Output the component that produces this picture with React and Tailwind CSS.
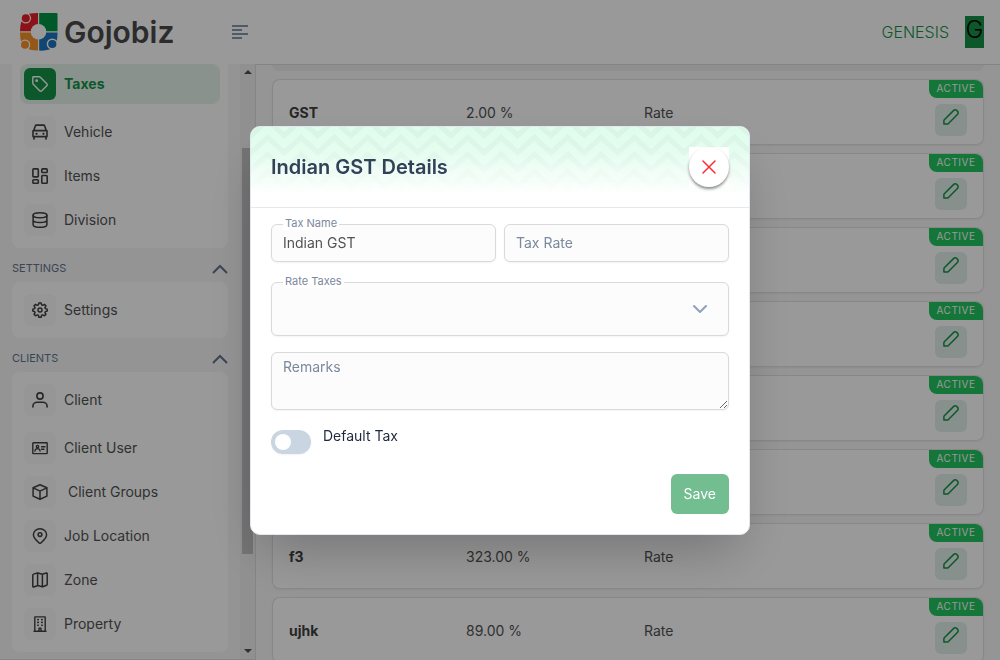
import React from "react";

const taxes = [
  { name: "GST", rate: "2.00 %", type: "Rate" },
  { name: "", rate: "", type: "" },
  { name: "", rate: "", type: "" },
  { name: "", rate: "", type: "" },
  { name: "", rate: "", type: "" },
  { name: "", rate: "", type: "" },
  { name: "f3", rate: "323.00 %", type: "Rate" },
  { name: "ujhk", rate: "89.00 %", type: "Rate" },
];

function Icon({ children, width = 1.4 }) {
  return (
    <svg viewBox="0 0 16 16" className="size-4 shrink-0" fill="none" stroke="currentColor" strokeWidth={width} strokeLinecap="round" strokeLinejoin="round" aria-hidden="true">
      {children}
    </svg>
  );
}

const icons = {
  tag: (
    <Icon width={1.4}>
      <path d="M.8 1.4v5.7c0 .5.2.9.5 1.2l6.4 6.5c.6.6 1.5.6 2.1 0l5-5c.6-.6.6-1.5 0-2.1L8.300 1.200C8 .9 7.600.8 7.200.8H1.400a.6.6 0 0 0-.6.6Z" />
      <circle cx="4.700" cy="4.700" r=".7" />
    </Icon>
  ),
  car: (
    <Icon width={1.600}>
      <path d="M1.700 6.800 3.300 2c.2-.6.6-.9 1.200-.9h7c.6 0 1 .3 1.200.9l1.600 4.800M1.500 6.600h13c.3 0 .5.2.5.5v5.500H1V7.100c0-.3.2-.5.500-.5ZM2 12.800v2.300M14 12.800v2.300" />
      <path d="M4.300 9.700h.4M11.300 9.700h.4" strokeWidth="1.900" />
    </Icon>
  ),
  grid: (
    <Icon width={1.600}>
      <rect x=".9" y=".9" width="5.400" height="8" rx=".8" />
      <rect x="9.800" y=".9" width="5.400" height="3.600" rx=".8" />
      <rect x=".9" y="11.700" width="5.400" height="3.500" rx=".8" />
      <rect x="9.800" y="7.500" width="5.400" height="7.700" rx=".8" />
    </Icon>
  ),
  database: (
    <Icon width={1.500}>
      <ellipse cx="8" cy="3.300" rx="6.900" ry="2.500" />
      <path d="M1.100 3.300v9.100c0 1.600 3 2.900 6.900 2.900s6.900-1.300 6.900-2.900V3.300M1.100 7.800c0 1.600 3 2.800 6.900 2.800s6.900-1.200 6.900-2.800" />
    </Icon>
  ),
  gear: (
    <Icon width={1.500}>
      <circle cx="8" cy="8" r="2" />
      <path d="M6.900.9h2.200l.5 1.900 1.100.5 1.800-.9 1.400 1.400-.9 1.800.4 1 1.800.5v1.900l-1.800.6-.4 1 .9 1.800-1.500 1.400-1.700-.9-1.100.4-.5 1.900H6.900l-.5-1.900-1.100-.4-1.700.9-1.500-1.400.9-1.800-.4-1L.8 9V7.100l1.800-.5.4-1-.9-1.800 1.400-1.400 1.800.9 1.100-.5Z" />
    </Icon>
  ),
  user: (
    <Icon width={1.600}>
      <circle cx="8" cy="4" r="3.100" />
      <path d="M.9 15v-.6C.9 11.900 3 10.300 5.200 10.300h5.600c2.200 0 4.300 1.600 4.300 4.100v.6" />
    </Icon>
  ),
  idCard: (
    <Icon width={1.400}>
      <rect x=".8" y="2.700" width="14.400" height="10.900" rx=".6" />
      <circle cx="5.500" cy="6.600" r="1.200" />
      <path d="M2.900 11c.2-1.500 1.200-2.400 2.600-2.400S7.900 9.500 8.100 11M9.600 6.700H13M9.600 9.300h2.300" />
    </Icon>
  ),
  box: (
    <Icon width={1.500}>
      <path d="M8 .8 14.900 3.800v8.300L8 15.300l-6.900-3.200V3.800ZM1.200 3.900 8 7.200l6.800-3.300M8 7.200v8" />
    </Icon>
  ),
  pin: (
    <Icon width={1.500}>
      <path d="M8 15.300c-.4 0-.8-.2-1.200-.6C3.800 12 1.400 9.900 1.400 6.800 1.400 3.300 4.400.8 8 .8s6.600 2.500 6.600 6c0 3.100-2.400 5.200-5.400 7.900-.4.400-.8.600-1.200.6Z" />
      <circle cx="8" cy="6.600" r="1.900" />
    </Icon>
  ),
  map: (
    <Icon width={1.500}>
      <path d="M.8 3.200c0-.5.3-.9.8-1.100L5.200 1c.3-.1.500-.1.800 0l4.200 1.300 4.100-1.300c.5-.1.900.2.900.6v10.600c0 .5-.3.900-.7 1l-3.600 1.500c-.3.100-.5.100-.8 0L6 13.500l-4.200 1.500c-.5.200-1-.2-1-.7ZM5.600 1v12.400M10.400 2.400v12.300" />
    </Icon>
  ),
  building: (
    <Icon width={1.400}>
      <path d="M2.800 15V.9h10.400V15M2 15.200h12M7 15v-2.800h2V15" />
      <path d="M5.800 3.600h.5M9.700 3.600h.5M5.800 6.400h.5M9.700 6.400h.5M5.800 9.200h.5M9.700 9.200h.5" strokeWidth="1.600" />
    </Icon>
  ),
};

function Logo() {
  return (
    <svg viewBox="0 0 38 38" className="size-[38px] shrink-0" aria-hidden="true">
      <path d="M9 .8Q13.500 0 18 0v18.300H0Q0 13 1.200 9Z" fill="#e5202a" />
      <path d="M19.200 0h17.300q1 0 1 1v17.300H19.200Z" fill="#009444" />
      <path d="M0 19.400h18v18.100q-5 0-8-.8L1.200 29Q0 25 0 19.400Z" fill="#f6932a" />
      <path d="M19.200 19.400h18.300q0 6-1 9.600l-7 7.500q-5 1.500-10.300 1Z" fill="#1b75bc" />
      <circle cx="18.500" cy="18.800" r="7.800" fill="#fff" />
      <circle cx="5.800" cy="5.200" r="5.300" fill="#fff" />
      <circle cx="5.800" cy="5.200" r="4" fill="#e5202a" />
      <circle cx="5" cy="31.800" r="5.300" fill="#fff" />
      <circle cx="5" cy="31.800" r="4" fill="#f6932a" />
      <circle cx="32.300" cy="31" r="5.600" fill="#fff" />
      <circle cx="32.300" cy="31" r="4.100" fill="#1b75bc" />
    </svg>
  );
}

function NavItem({ icon, label, active, indent }) {
  return (
    <li>
      <a href="#" className={active ? "flex h-10 items-center gap-2 rounded-lg bg-[#e4f3ea] p-1 font-bold text-[#149348]" : "flex h-10 items-center gap-2 rounded-lg p-1 text-[#525252]"}>
        <span className={active ? "flex size-8 items-center justify-center rounded-md bg-[#149348] text-white" : "flex size-8 items-center justify-center rounded-md bg-[#fafafa] text-[#404040]"}>
          {icons[icon]}
        </span>
        <span className={indent ? "ml-1" : ""}>{label}</span>
      </a>
    </li>
  );
}

function Section({ title, children }) {
  return (
    <section>
      <button type="button" className="flex h-[34px] w-full items-center justify-between pt-2 text-[11px] text-slate-500">
        {title}
        <svg viewBox="0 0 16 10" className="h-2.5 w-4" fill="none" stroke="currentColor" strokeWidth="2" aria-hidden="true">
          <path d="m1 9 7-7 7 7" />
        </svg>
      </button>
      {children}
    </section>
  );
}

function Sidebar() {
  return (
    <aside className="flex w-64 shrink-0 overflow-hidden border-r border-b border-[#dedede] bg-[#f7f7f7]">
      <nav className="min-w-0 flex-1 px-3 text-sm">
        <ul className="flex flex-col gap-1 rounded-b-lg bg-white px-2 pb-2">
          <NavItem icon="tag" label="Taxes" active />
          <li className="h-0" aria-hidden="true" />
          <NavItem icon="car" label="Vehicle" />
          <NavItem icon="grid" label="Items" />
          <NavItem icon="database" label="Division" />
        </ul>
        <Section title="SETTINGS">
          <ul className="rounded-lg bg-white p-2">
            <NavItem icon="gear" label="Settings" />
          </ul>
        </Section>
        <Section title="CLIENTS">
          <ul className="flex flex-col gap-1 rounded-lg bg-white p-2">
            <NavItem icon="user" label="Client" />
            <li className="h-0" aria-hidden="true" />
            <NavItem icon="idCard" label="Client User" />
            <NavItem icon="box" label="Client Groups" indent />
            <NavItem icon="pin" label="Job Location" />
            <NavItem icon="map" label="Zone" />
            <NavItem icon="building" label="Property" />
          </ul>
        </Section>
      </nav>
      <div className="flex w-[15px] shrink-0 flex-col items-center bg-[#f1f1f1]" aria-hidden="true">
        <svg viewBox="0 0 8 4" className="mt-1.5 h-1 w-2"><path d="M0 4 4 0l4 4Z" fill="#505050" /></svg>
        <div className="min-h-0 flex-[74]" />
        <div className="min-h-0 w-[11px] flex-[406] bg-[#c1c1c1]" />
        <div className="min-h-0 flex-[95]" />
        <svg viewBox="0 0 8 4" className="mb-1.5 h-1 w-2"><path d="m0 0 4 4 4-4Z" fill="#505050" /></svg>
      </div>
    </aside>
  );
}

function TaxTable() {
  return (
    <table className="w-full table-fixed border-separate border-spacing-x-0 border-spacing-y-2 text-left text-sm text-[#525252]">
      <tbody>
        {taxes.map((tax, i) => (
          <tr key={i} className="h-[66px] rounded-lg shadow-xs">
            <td className="rounded-l-lg border-y border-l border-[#e2e2e2] bg-white px-4 pt-0.5 pb-0 font-bold text-[#404040]">{tax.name}</td>
            <td className="border-y border-[#e2e2e2] bg-white px-4 pt-0.5 pb-0">{tax.rate}</td>
            <td className="border-y border-[#e2e2e2] bg-white px-4 pt-0.5 pb-0">{tax.type}</td>
            <td className="rounded-r-lg border-y border-r border-[#e2e2e2] bg-white p-0">
              <div className="flex h-16 flex-col items-end gap-1.5">
                <span className="flex h-[18px] w-[54px] items-center justify-center rounded-tr-lg rounded-bl-lg bg-[#22c55e] pb-0.5 text-[10px] tracking-wider text-white">ACTIVE</span>
                <button type="button" aria-label="Edit tax" className="mr-4 flex size-8 justify-center rounded-md bg-[#e2f1e9] pt-[5px] text-[#149348]">
                  <Icon width={1.500}>
                    <path d="M.9 15.100v-3.300c0-.4.100-.7.400-1l9.200-9.200c1-1 2.500-1 3.400 0l.5.500c1 1 1 2.400 0 3.400l-9.200 9.200c-.3.300-.6.400-1 .4Z" />
                  </Icon>
                </button>
              </div>
            </td>
          </tr>
        ))}
      </tbody>
    </table>
  );
}

function Zigzag() {
  return (
    <svg className="absolute inset-0 size-full" aria-hidden="true">
      <defs>
        <pattern id="zigzag" width="100" height="17" patternUnits="userSpaceOnUse">
          {[-17, 0, 17].map((y) => (
            <path key={y} transform={`translate(0 ${y})`} d="M0 22 16.700 7 33.300 22 50 7 66.700 22 83.300 7 100 22v7L83.300 14 66.700 29 50 14 33.300 29 16.700 14 0 29Z" fill="#d9f5e6" />
          ))}
        </pattern>
        <linearGradient id="fade" x1="0" y1="0" x2="0" y2="1">
          <stop offset="0" stopColor="#fff" stopOpacity="0" />
          <stop offset=".3" stopColor="#fff" stopOpacity=".15" />
          <stop offset=".85" stopColor="#fff" />
        </linearGradient>
      </defs>
      <rect width="100%" height="100%" fill="#dffdec" />
      <rect width="100%" height="100%" fill="url(#zigzag)" />
      <rect width="100%" height="100%" fill="url(#fade)" />
    </svg>
  );
}

const fieldClass = "block w-full rounded-md border border-[#d9d9d9] bg-[#fcfcfc] px-[11px] text-sm text-[#525252] shadow-xs outline-none placeholder:text-[#7c889c]";
const floatLabel = "absolute -top-2 left-3 bg-white px-0.5 text-[11px] leading-[14px] text-[#7c889c]";

function TaxDialog() {
  return (
    <div className="fixed inset-0 z-20 flex items-center justify-center bg-black/40">
      <div role="dialog" aria-modal="true" aria-labelledby="dialog-title" className="w-full max-w-[500px] overflow-hidden rounded-[10px] border border-slate-200 bg-white shadow-2xl">
        <header className="relative flex items-center justify-between border-b border-gray-200 p-5">
          <Zigzag />
          <h2 id="dialog-title" className="relative text-xl font-semibold text-slate-700">Indian GST Details</h2>
          <div className="relative bg-white">
            <button type="button" aria-label="Close" className="flex size-10 items-center justify-center rounded-full bg-white text-red-500 shadow-[0_2px_3px_rgba(0,0,0,0.45)]">
              <svg viewBox="0 0 14 14" className="size-3.5" fill="none" stroke="currentColor" strokeWidth="1.500" strokeLinecap="round" aria-hidden="true">
                <path d="m1 1 12 12M13 1 1 13" />
              </svg>
            </button>
          </div>
        </header>
        <form className="px-5 pt-4 pb-5" onSubmit={(e) => e.preventDefault()}>
          <div className="grid grid-cols-2 gap-2">
            <div className="relative">
              <input id="tax-name" defaultValue="Indian GST" className={`${fieldClass} h-[38px]`} />
              <label htmlFor="tax-name" className={floatLabel}>Tax Name</label>
            </div>
            <input aria-label="Tax Rate" placeholder="Tax Rate" className={`${fieldClass} h-[38px]`} />
          </div>
          <div className="relative mt-5">
            <select id="rate-taxes" className={`${fieldClass} h-[54px] appearance-none`} />
            <label htmlFor="rate-taxes" className={floatLabel}>Rate Taxes</label>
            <svg viewBox="0 0 14 8" className="pointer-events-none absolute top-[23px] right-[22px] h-2 w-3.5 text-slate-400" fill="none" stroke="currentColor" strokeWidth="2" strokeLinecap="round" aria-hidden="true">
              <path d="m1 1 6 6 6-6" />
            </svg>
          </div>
          <textarea aria-label="Remarks" placeholder="Remarks" className={`${fieldClass} mt-4 h-[58px] pt-1`} />
          <div className="mt-4 flex gap-3 text-sm text-slate-800">
            <input id="default-tax" type="checkbox" className="mt-1 h-6 w-10 appearance-none rounded-full bg-slate-300 p-1 shadow-xs before:block before:size-4 before:rounded-full before:bg-white checked:bg-[#149348] checked:before:ml-4" />
            <label htmlFor="default-tax">Default Tax</label>
          </div>
          <div className="mt-5 flex justify-end">
            <button type="submit" className="h-10 rounded-md bg-[#72be91] px-[13px] text-sm text-white">Save</button>
          </div>
        </form>
      </div>
    </div>
  );
}

export default function App() {
  return (
    <div className="flex h-screen flex-col overflow-hidden bg-[#f8f8f8] font-['Inter','Liberation_Sans',sans-serif]">
      <header className="flex h-16 shrink-0 items-center justify-between bg-white px-4">
        <div className="flex items-center gap-[58px] pl-1">
          <a href="#" className="flex items-center gap-1.5 text-3xl font-semibold text-[#4a4a4a]">
            <Logo />
            Gojobiz
          </a>
          <button type="button" aria-label="Toggle menu" className="text-slate-500">
            <svg viewBox="0 0 16 14" className="h-3.5 w-4" stroke="currentColor" strokeWidth="1.300" aria-hidden="true">
              <path d="M0 1h16M0 5h10M0 9h16M0 13h10" />
            </svg>
          </button>
        </div>
        <div className="flex items-center gap-4">
          <span className="text-base font-light text-[#149348]">GENESIS</span>
          <span className="flex h-8 w-[19px] items-center justify-center bg-[#149348] pb-1 text-2xl font-light text-black">G</span>
        </div>
      </header>
      <div className="flex min-h-0 flex-1">
        <Sidebar />
        <main className="min-w-0 flex-1 overflow-hidden border-t border-[#dedede] px-4">
          <div className="h-1.5 rounded-b-lg bg-[#eeeeee]" />
          <TaxTable />
        </main>
      </div>
      <TaxDialog />
    </div>
  );
}
